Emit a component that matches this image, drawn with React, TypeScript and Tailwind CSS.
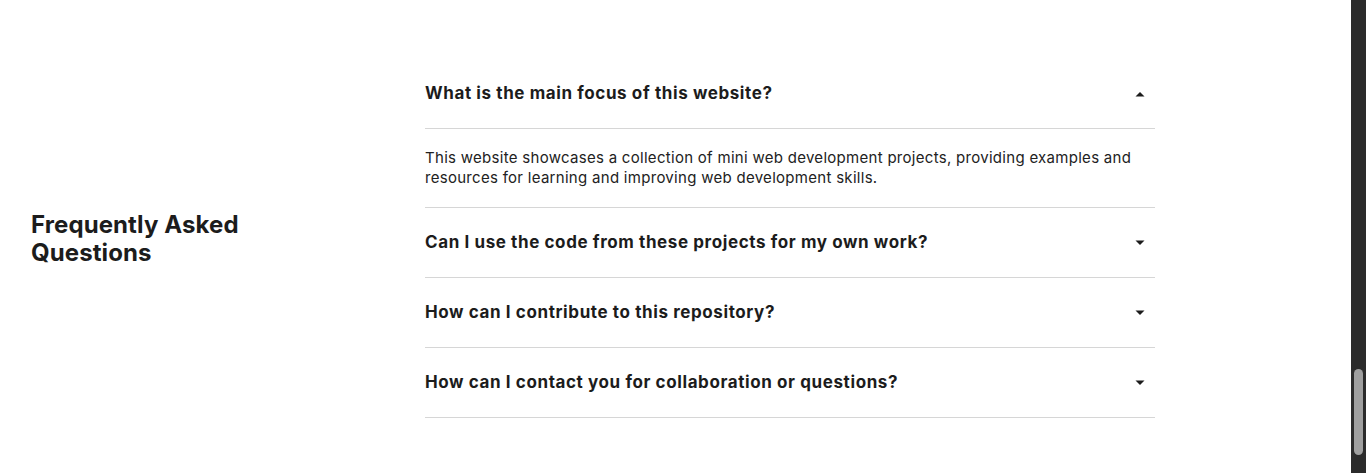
import { useState } from 'react'

const faqs = [
  {
    q: 'What is the main focus of this website?',
    a: 'This website showcases a collection of mini web development projects, providing examples and resources for learning and improving web development skills.',
  },
  {
    q: 'Can I use the code from these projects for my own work?',
    a: 'Yes, the code is open source and free to use in your own projects.',
  },
  {
    q: 'How can I contribute to this repository?',
    a: 'Fork the repository, make your changes and open a pull request.',
  },
  {
    q: 'How can I contact you for collaboration or questions?',
    a: 'You can reach out through the contact links in the footer.',
  },
]

const Caret = ({ open }: { open: boolean }) => (
  <svg width="10" height="6" viewBox="0 0 10 6" className="shrink-0 fill-[#1c1c1c]">
    {open ? <path d="M0.5 5.5 L5 1 L9.5 5.5 Z" /> : <path d="M0.5 0.5 L9.5 0.5 L5 5 Z" />}
  </svg>
)

const FaqItem = ({ q, a, open, onToggle }: { q: string; a: string; open: boolean; onToggle: () => void }) => (
  <div>
    <button
      onClick={onToggle}
      className="flex h-[70px] w-full items-center justify-between border-b border-[#d6d6d6] pr-[10px] text-left text-[17px] font-bold tracking-[0.6px] text-[#1c1c1c]"
    >
      <span>{q}</span>
      <Caret open={open} />
    </button>
    {open && (
      <p className="border-b border-[#d6d6d6] pt-[19px] pb-[19px] text-[15px] leading-[20px] tracking-[0.29px] text-[#222]">
        {a}
      </p>
    )}
  </div>
)

export default function App() {
  const [open, setOpen] = useState(0)

  return (
    <div className="flex h-[473px] w-full bg-white font-['Inter',sans-serif]">
      <section className="flex flex-1 items-center px-[31px] pt-[4px]">
        <h2 className="w-[394px] shrink-0 text-[24px] leading-[28px] font-bold tracking-[0.1px] text-[#1c1c1c]">
          Frequently Asked
          <br />
          Questions
        </h2>
        <div className="w-[730px]">
          {faqs.map((f, i) => (
            <FaqItem key={f.q} {...f} open={open === i} onToggle={() => setOpen(open === i ? -1 : i)} />
          ))}
        </div>
      </section>
      {/* page scrollbar, scrolled to the bottom */}
      <div className="flex w-[15px] shrink-0 flex-col justify-end bg-[#2b2b2b] px-[3px] pb-[18px]">
        <div className="h-[86px] rounded-full bg-[#9f9f9f]" />
      </div>
    </div>
  )
}
